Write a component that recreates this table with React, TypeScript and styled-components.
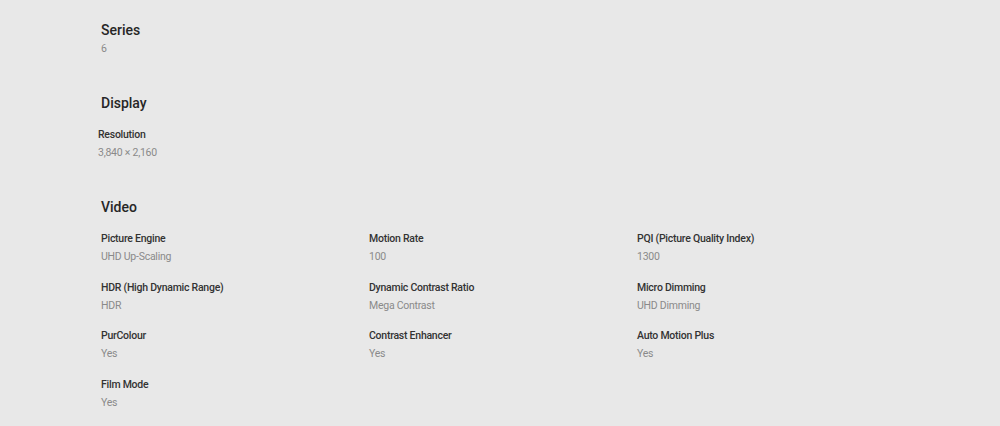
import React from "react";
import styled, { createGlobalStyle } from "styled-components";

const Global = createGlobalStyle`
  html, body { margin: 0; padding: 0; background: #e8e8e8; }
  body { font-family: Roboto, "Noto Sans", Arial, sans-serif; }
`;

const Page = styled.div`
  width: 1000px;
  height: 426px;
  background: #e8e8e8;
  padding: 20px 0 0 101px;
  box-sizing: border-box;
  overflow: hidden;
`;

const Section = styled.section<{ $gap: number }>`
  margin-bottom: ${(p) => p.$gap}px;
`;

const Heading = styled.h2`
  margin: 0;
  font-size: 14px;
  line-height: 20px;
  font-weight: 500;
  color: #262626;
`;

const Grid = styled.div<{ $shift?: number }>`
  display: grid;
  grid-template-columns: repeat(3, 268px);
  row-gap: 13.5px;
  margin-top: 13px;
  margin-left: ${(p) => p.$shift ?? 0}px;
`;

const Item = styled.div`
  display: flex;
  flex-direction: column;
`;

const Label = styled.div`
  font-size: 10.5px;
  line-height: 17px;
  font-weight: 500;
  letter-spacing: -0.25px;
  color: #333;
`;

const Value = styled.div`
  font-size: 10.5px;
  line-height: 17px;
  letter-spacing: -0.25px;
  color: #8a8a8a;
  margin-top: 1px;
`;

const Plain = styled(Value)`
  margin-top: 0;
`;

const video: [string, string][] = [
  ["Picture Engine", "UHD Up-Scaling"],
  ["Motion Rate", "100"],
  ["PQI (Picture Quality Index)", "1300"],
  ["HDR (High Dynamic Range)", "HDR"],
  ["Dynamic Contrast Ratio", "Mega Contrast"],
  ["Micro Dimming", "UHD Dimming"],
  ["PurColour", "Yes"],
  ["Contrast Enhancer", "Yes"],
  ["Auto Motion Plus", "Yes"],
  ["Film Mode", "Yes"],
];

export default function App() {
  return (
    <Page>
      <Global />
      <Section $gap={36}>
        <Heading>Series</Heading>
        <Plain>6</Plain>
      </Section>
      <Section $gap={36}>
        <Heading>Display</Heading>
        <Grid $shift={-3}>
          <Item>
            <Label>Resolution</Label>
            <Value>3,840 × 2,160</Value>
          </Item>
        </Grid>
      </Section>
      <Section $gap={0}>
        <Heading>Video</Heading>
        <Grid>
          {video.map(([l, v]) => (
            <Item key={l}>
              <Label>{l}</Label>
              <Value>{v}</Value>
            </Item>
          ))}
        </Grid>
      </Section>
    </Page>
  );
}
